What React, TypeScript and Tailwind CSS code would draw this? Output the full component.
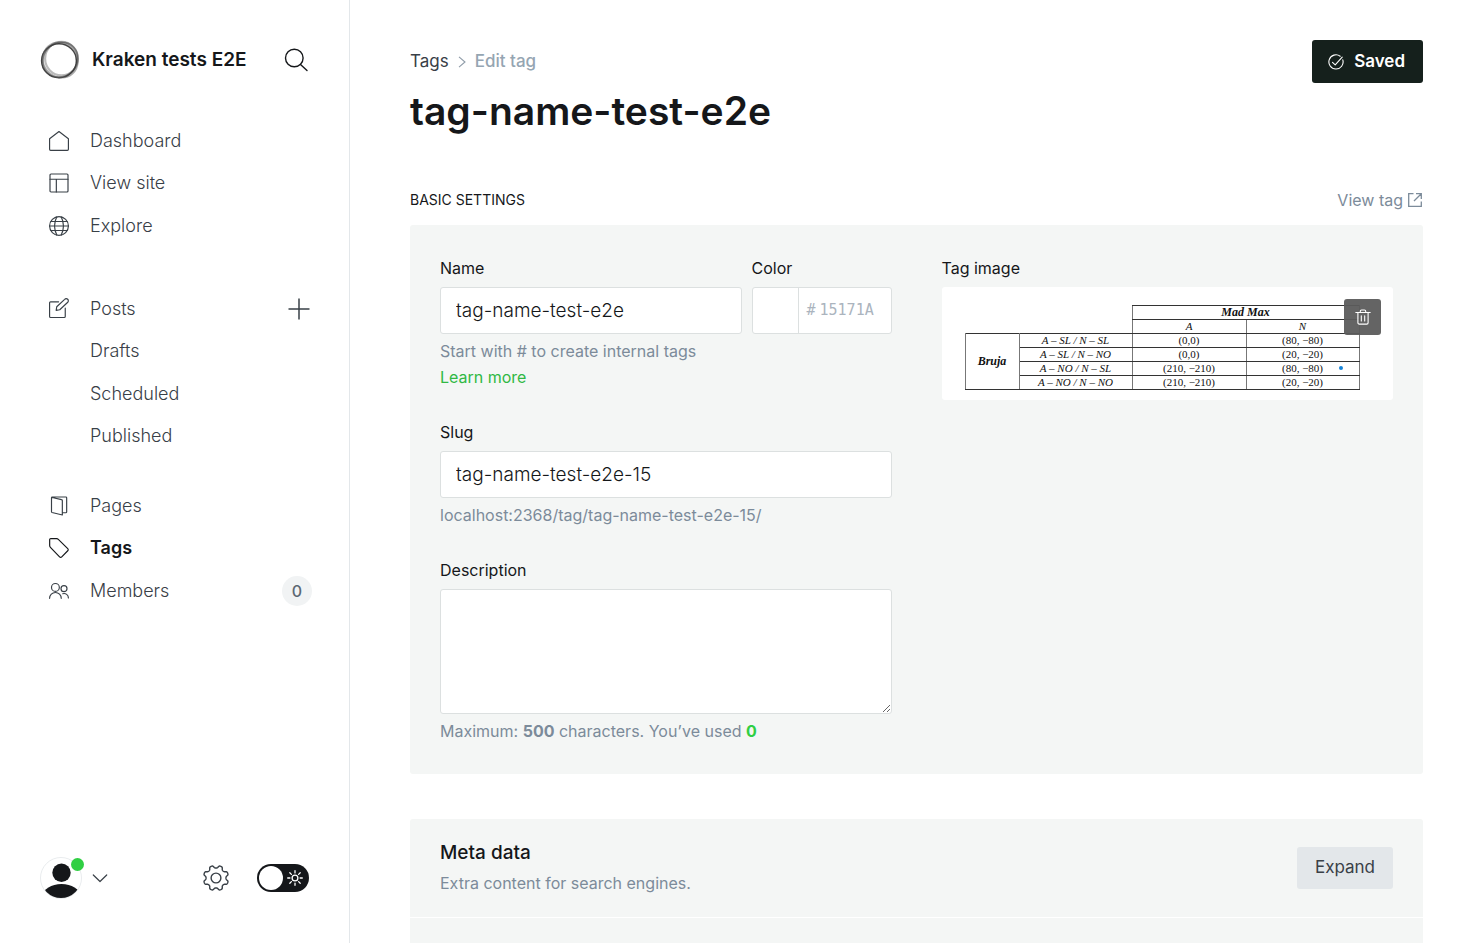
import React, { useState } from "react";

type IconProps = { children: React.ReactNode; className?: string };

function Icon({ children, className = "size-5" }: IconProps) {
  return (
    <svg
      viewBox="0 0 24 24"
      fill="none"
      stroke="currentColor"
      strokeWidth="1.4"
      strokeLinecap="round"
      strokeLinejoin="round"
      aria-hidden="true"
      className={className}
    >
      {children}
    </svg>
  );
}

const icons = {
  home: <path d="M.7 9.2 12 .7l11.300 8.500V22a1.200 1.200 0 0 1-1.200 1.200H1.900A1.200 1.200 0 0 1 .7 22z" />,
  site: (
    <>
      <rect x="1.200" y="1.200" width="21.600" height="21.600" rx="1.200" />
      <path d="M1.200 7.500h21.600M8.800 7.500v15.300" />
    </>
  ),
  globe: (
    <>
      <circle cx="12" cy="12" r="11.300" />
      <path d="M2.200 6.600h19.600M.7 12h22.600M2.200 17.400h19.600M9.400 1C5.900 8 5.900 16 9.400 23M14.600 1c3.500 7 3.500 15 0 22" />
    </>
  ),
  posts: (
    <>
      <path d="M19.500 11v10a1.200 1.200 0 0 1-1.200 1.200H1.900A1.200 1.200 0 0 1 .7 21V4.600a1.200 1.200 0 0 1 1.200-1.200h9.600" />
      <path d="m12.900 12.900-4.300.7.700-4.300L18.800.4a2.500 2.500 0 0 1 3.700 3.500z" />
    </>
  ),
  pages: (
    <path d="M3.800 1.800 15 4.300a1.200 1.200 0 0 1 1 1.200v17.300L3.700 19.800a1 1 0 0 1-.7-1V2a.8.8 0 0 1 .8-.8h16.400a1 1 0 0 1 1 1v16.900a1 1 0 0 1-1 1H16" />
  ),
  tags: <path d="M.8 9.100V2A1.300 1.300 0 0 1 2.100.7l7.100.1a3 3 0 0 1 2 .8l11.300 11.100a1.800 1.800 0 0 1 0 2.600l-7.200 7.300a1.800 1.800 0 0 1-2.600 0L1.700 11.200a3 3 0 0 1-.9-2.100z" />,
  members: (
    <>
      <circle cx="7.700" cy="7.700" r="4.700" />
      <path d="M.7 20.800a7 7 0 0 1 14 0" />
      <circle cx="18" cy="9.200" r="3.600" />
      <path d="M16.500 15.300a5.200 5.200 0 0 1 6.800 5" />
    </>
  ),
};

const gearPoints = Array.from({ length: 160 }, (_, i) => {
  const angle = (i / 160) * Math.PI * 2;
  const radius = 11.3 - 1.4 * Math.tanh(1.8 * Math.cos(8 * angle));
  return `${(14 + radius * Math.sin(angle)).toFixed(2)},${(14 - radius * Math.cos(angle)).toFixed(2)}`;
}).join(" ");

function NavLink({
  label,
  icon,
  active = false,
}: {
  label: string;
  icon?: React.ReactNode;
  active?: boolean;
}) {
  return (
    <a
      href="#"
      aria-current={active ? "page" : undefined}
      className={
        active
          ? "flex flex-1 items-center gap-5 font-semibold text-[#15171a]"
          : "flex flex-1 items-center gap-5 font-light text-[#394047]"
      }
    >
      <span className="flex w-[22px] shrink-0 justify-center">
        {icon && <Icon className="size-5 overflow-visible">{icon}</Icon>}
      </span>
      {label}
    </a>
  );
}

function Sidebar() {
  const [night, setNight] = useState(false);
  return (
    <aside className="flex w-[350px] shrink-0 flex-col border-r border-[#e3e7ea] pr-[37px] pl-10">
      <div className="flex h-[120px] items-center">
        <svg viewBox="0 0 40 40" fill="none" className="size-10" aria-hidden="true">
          <ellipse cx="21.500" cy="18.600" rx="16.400" ry="16.800" stroke="#666" strokeOpacity=".45" strokeWidth="2.200" />
          <ellipse cx="19" cy="20.700" rx="17.400" ry="17" stroke="#222" strokeOpacity=".85" strokeWidth="1.500" />
          <ellipse cx="20.300" cy="19.700" rx="16.600" ry="18.300" stroke="#444" strokeOpacity=".6" strokeWidth="1.500" transform="rotate(48 20.300 19.700)" />
          <ellipse cx="20.300" cy="20" rx="16.900" ry="18.300" stroke="#555" strokeOpacity=".5" strokeWidth="1.600" transform="rotate(-42 20.300 20)" />
        </svg>
        <span className="ml-3 text-[19px] font-semibold text-[#15171a]">Kraken tests E2E</span>
        <button type="button" aria-label="Search" className="mr-1 ml-auto text-[#15171a]">
          <Icon className="size-6">
            <circle cx="10.300" cy="10" r="8.800" />
            <path d="m16.500 16.500 6.500 6" />
          </Icon>
        </button>
      </div>

      <nav className="flex flex-col pl-2 text-lg">
        <div className="flex h-[127px] flex-col">
          <NavLink label="Dashboard" icon={icons.home} />
          <NavLink label="View site" icon={icons.site} />
          <NavLink label="Explore" icon={icons.globe} />
        </div>
        <div className="mt-[41px] flex h-[169px] flex-col">
          <div className="flex flex-1 items-center">
            <NavLink label="Posts" icon={icons.posts} />
            <button type="button" aria-label="New post" className="mr-0.5 text-[#394047]">
              <svg viewBox="0 0 22 22" className="size-[22px]" stroke="currentColor" strokeWidth="1.500" aria-hidden="true">
                <path d="M11 .5v21M.5 11h21" />
              </svg>
            </button>
          </div>
          <NavLink label="Drafts" />
          <NavLink label="Scheduled" />
          <NavLink label="Published" />
        </div>
        <div className="mt-7 flex h-[127px] flex-col">
          <NavLink label="Pages" icon={icons.pages} />
          <NavLink label="Tags" icon={icons.tags} active />
          <div className="flex flex-1 items-center">
            <NavLink label="Members" icon={icons.members} />
            <span className="flex h-[30px] min-w-[30px] items-center justify-center rounded-full bg-[#f1f3f4] text-base font-medium text-[#5c6873]">
              0
            </span>
          </div>
        </div>
      </nav>

      <div className="mt-auto mb-11 flex h-[42px] items-center">
        <button type="button" aria-label="Account" className="flex items-center gap-2.5 text-[#394047]">
          <span className="relative">
            <svg viewBox="0 0 42 42" className="size-[42px]" aria-hidden="true">
              <defs>
                <clipPath id="avatar">
                  <circle cx="21" cy="20.500" r="20.500" />
                </clipPath>
              </defs>
              <circle cx="21" cy="21" r="20.500" fill="#fff" stroke="#e9ecee" />
              <g clipPath="url(#avatar)" fill="#15171a">
                <circle cx="21.500" cy="15.700" r="9.200" />
                <ellipse cx="21.500" cy="39" rx="18.500" ry="12" />
              </g>
            </svg>
            <span className="absolute top-px -right-0.5 size-[13px] rounded-full bg-[#30cf43]" />
          </span>
          <svg viewBox="0 0 16 16" fill="none" stroke="currentColor" strokeWidth="1.200" strokeLinecap="round" strokeLinejoin="round" className="size-4" aria-hidden="true">
            <path d="m1.300 5 6.700 6.500L14.700 5" />
          </svg>
        </button>
        <a href="#" aria-label="Settings" className="ml-auto text-[#394047]">
          <svg viewBox="0 0 28 28" fill="none" stroke="currentColor" strokeWidth="1.400" strokeLinejoin="round" className="size-7" aria-hidden="true">
            <polygon points={gearPoints} />
            <circle cx="14" cy="14" r="4.900" />
          </svg>
        </a>
        <button
          type="button"
          role="switch"
          aria-checked={night}
          aria-label="Night shift"
          onClick={() => setNight(!night)}
          className="mr-[3px] ml-[27px] flex h-7 w-[52px] items-center justify-between rounded-full bg-[#15171a] pr-1.5 pl-0.5 text-white"
        >
          <span className="size-6 rounded-full bg-white" />
          <svg viewBox="0 0 16 16" fill="none" stroke="currentColor" strokeWidth="1.300" strokeLinecap="round" className="size-4" aria-hidden="true">
            <circle cx="8" cy="8" r="2.900" />
            <path d="M8 .7v2.200M8 13.100v2.200M.7 8h2.200M13.100 8h2.200M2.800 2.800l1.600 1.600M11.600 11.600l1.600 1.600M2.800 13.200l1.600-1.600M11.600 4.400l1.600-1.600" />
          </svg>
        </button>
      </div>
    </aside>
  );
}

const payoffs = [
  ["A – SL / N – SL", "(0,0)", "(80, −80)"],
  ["A – SL / N – NO", "(0,0)", "(20, −20)"],
  ["A – NO / N – SL", "(210, −210)", "(80, −80)"],
  ["A – NO / N – NO", "(210, −210)", "(20, −20)"],
];

function TagImage() {
  const line = "border border-x-[#777] border-y-[#333] p-0";
  return (
    <div className="relative rounded-[3px] bg-white px-[23px] pt-[18px] pb-2.5">
      <table className="w-[394px] table-fixed border-collapse text-center font-['Liberation_Serif',serif] text-[11px] leading-[13px] font-medium text-[#111]">
        <colgroup>
          <col className="w-[54px]" />
          <col className="w-[113px]" />
          <col className="w-[114px]" />
          <col className="w-[113px]" />
        </colgroup>
        <thead>
          <tr>
            <td colSpan={2} rowSpan={2} className="p-0" />
            <th colSpan={2} className={`${line} text-xs leading-[13px] font-bold italic`}>Mad Max</th>
          </tr>
          <tr className="italic">
            <th className={`${line} font-medium`}>A</th>
            <th className={`${line} font-medium`}>N</th>
          </tr>
        </thead>
        <tbody>
          {payoffs.map(([name, a, n], i) => (
            <tr key={name}>
              {i === 0 && (
                <th rowSpan={4} className={`${line} text-xs leading-[13px] font-bold italic`}>Bruja</th>
              )}
              <td className={`${line} italic`}>{name}</td>
              <td className={line}>{a}</td>
              <td className={line}>
                <span className="relative">
                  {n}
                  {i === 2 && <span className="absolute top-1 -right-5 size-1 rounded-full bg-[#1683d8]" />}
                </span>
              </td>
            </tr>
          ))}
        </tbody>
      </table>
      <button type="button" aria-label="Delete image" className="absolute top-3 right-3 flex h-9 w-[37px] items-center justify-center rounded-[3px] bg-[#5c5c5c]/95 text-white">
        <svg viewBox="0 0 16 16" fill="none" stroke="currentColor" strokeWidth="1.100" strokeLinecap="round" strokeLinejoin="round" className="size-4" aria-hidden="true">
          <path d="M.8 3.500h14.400M5.300 3.500V2.200a1.200 1.200 0 0 1 1.200-1.200h3a1.200 1.200 0 0 1 1.200 1.200v1.300M2.900 3.500v10.300A1.300 1.300 0 0 0 4.200 15.100h7.600a1.300 1.300 0 0 0 1.300-1.300V3.500M6.300 6.700v5.300M9.700 6.700v5.300" />
        </svg>
      </button>
    </div>
  );
}

const label = "mb-1.5 block text-base leading-[26px] text-[#15171a]";
const box = "rounded-[3px] border border-[#dce0e0] bg-white";
const field = "h-[47px] w-full px-[15px] text-[19px] font-light text-[#15171a]";
const help = "mt-1 text-base leading-[26px] text-[#7c8b9a]";

export default function App() {
  const [name, setName] = useState("tag-name-test-e2e");
  const [slug, setSlug] = useState("tag-name-test-e2e-15");
  return (
    <div className="flex h-screen bg-white font-[Inter,sans-serif] text-[#15171a]">
      <Sidebar />
      <main className="min-w-0 flex-1 overflow-y-auto px-[60px] pt-10 [scrollbar-width:none]">
        <header className="flex items-start justify-between">
          <div>
            <div className="flex h-11 items-center gap-2 text-[17px]">
              <a href="#" className="text-[#394047]">Tags</a>
              <svg viewBox="0 0 10 12" fill="none" stroke="#8e9ba8" strokeWidth="1.100" className="h-3 w-2.5" aria-hidden="true">
                <path d="m2 .8 6 5.200-6 5.200" />
              </svg>
              <span className="font-medium text-[#95a5b2]">Edit tag</span>
            </div>
            <h1 className="text-[39px] leading-[54px] font-semibold">{name}</h1>
          </div>
          <button type="button" className="flex h-[43px] items-center gap-2.5 rounded-[3px] bg-[#15201c] px-4 text-[17px] font-semibold text-white">
            <svg viewBox="0 0 16 16" fill="none" stroke="currentColor" strokeWidth="1.100" strokeLinecap="round" strokeLinejoin="round" className="size-4" aria-hidden="true">
              <path d="M14.800 5.900A7.100 7.100 0 1 1 12.200 2.200" />
              <path d="m4.500 8.300 2.700 2.500L14.200 3.200" />
            </svg>
            <span className="pr-0.5">Saved</span>
          </button>
        </header>

        <section>
          <div className="mt-12 mb-3 flex h-[27px] items-center justify-between">
            <h2 className="text-sm">BASIC SETTINGS</h2>
            <a href="#" className="flex items-center gap-1 text-base text-[#7c8b9a]">
              View tag
              <svg viewBox="0 0 16 16" fill="none" stroke="currentColor" strokeWidth="1.300" className="size-4" aria-hidden="true">
                <path d="M6.500 1.700H1.700v12.600h12.600V9.500M9 1.700h5.300V7M14.300 1.700 7 9" />
              </svg>
            </a>
          </div>
          <div className="grid grid-cols-2 gap-[50px] rounded-[3px] bg-[#f4f6f5] p-[30px]">
            <div className="flex flex-col gap-[29px]">
              <div>
                <div className="flex gap-2.5">
                  <div className="min-w-0 flex-1">
                    <label htmlFor="tag-name" className={label}>Name</label>
                    <input id="tag-name" value={name} onChange={(e) => setName(e.target.value)} className={`${box} ${field}`} />
                  </div>
                  <div className="w-[140px]">
                    <label htmlFor="tag-color" className={label}>Color</label>
                    <div className={`${box} flex h-[47px]`}>
                      <span className="w-[46px] shrink-0 border-r border-[#dce0e0]" />
                      <span className="flex min-w-0 items-center gap-1 pl-2 font-['DejaVu_Sans_Mono',monospace] text-[15px] text-[#abb4be]">
                        #
                        <input id="tag-color" placeholder="15171A" className="w-full min-w-0 bg-transparent placeholder:text-[#abb4be]" />
                      </span>
                    </div>
                  </div>
                </div>
                <p className={help}>
                  Start with # to create internal tags
                  <br />
                  <a href="#" className="text-[#30b944]">Learn more</a>
                </p>
              </div>
              <div>
                <label htmlFor="tag-slug" className={label}>Slug</label>
                <input id="tag-slug" value={slug} onChange={(e) => setSlug(e.target.value)} className={`${box} ${field}`} />
                <p className={help}>localhost:2368/tag/{slug}/</p>
              </div>
              <div>
                <label htmlFor="tag-description" className={label}>Description</label>
                <textarea id="tag-description" className={`${box} block h-[125px] w-full px-[15px] py-2.5 text-[19px] font-light`} />
                <p className={help}>
                  Maximum: <b>500</b> characters. You’ve used <b className="text-[#30cf43]">0</b>
                </p>
              </div>
            </div>
            <div>
              <span className={label}>Tag image</span>
              <TagImage />
            </div>
          </div>
        </section>

        <section className="mt-[45px] rounded-[3px] bg-[#f4f6f5]">
          <div className="flex h-[99px] items-center justify-between border-b border-white px-[30px]">
            <div>
              <h3 className="text-[19px] leading-[30px] font-medium">Meta data</h3>
              <p className="text-base leading-[30px] text-[#7c8b9a]">Extra content for search engines.</p>
            </div>
            <button type="button" className="h-[42px] rounded-[3px] bg-[#e3e7ea] px-[18px] text-[17px] text-[#394047]">Expand</button>
          </div>
          <div className="h-24" />
        </section>
      </main>
    </div>
  );
}
